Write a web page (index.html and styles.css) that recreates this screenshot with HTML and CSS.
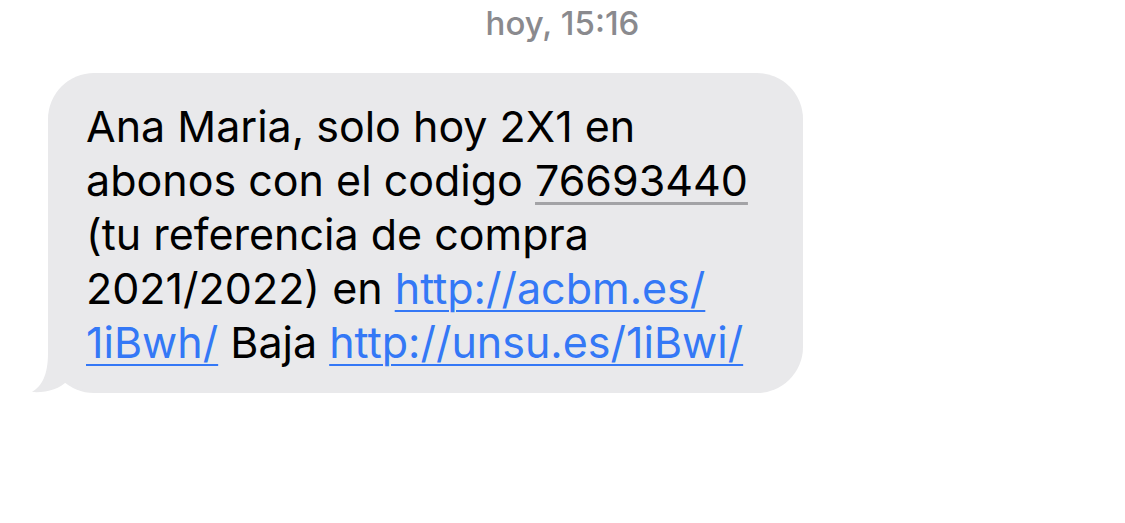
FILE: index.html
```html
<!DOCTYPE html>
<html lang="es">
<head>
    <meta charset="UTF-8">
    <meta name="viewport" content="width=device-width, initial-scale=1.0">
    <title>Mensajes</title>
    <link rel="stylesheet" href="styles.css">
</head>
<body>
    <div class="thread">
        <div class="timestamp">hoy, 15:16</div>
        <div class="bubble">
            <p class="text">Ana Maria, solo hoy 2X1 en<br>abonos con el codigo <span class="code">76693440</span><br>(tu referencia de compra<br>2021/2022) en <a href="#">http://acbm.es/<br>1iBwh/</a> Baja <a href="#">http://unsu.es/1iBwi/</a></p>
            <svg class="tail" width="80" height="70" viewBox="0 0 80 70">
                <path d="M18,6 L18,30 C18,52 12,63 2,69 C16,70 30,66 37,58 C48,66 60,70 75,70 L75,6 Z" fill="#e9e9eb"/>
            </svg>
        </div>
    </div>
</body>
</html>
```

FILE: styles.css
```css
body {
    margin: 0;
    background: #fff;
    font-family: Inter, 'Noto Sans', sans-serif;
}
.thread {
    display: flex;
    flex-direction: column;
}
.timestamp {
    padding-top: 5px;
    height: 39px;
    line-height: 36px;
    font-size: 33px;
    font-weight: 500;
    color: #8a8a8e;
    text-align: center;
}
.bubble {
    position: relative;
    margin: 29px 0 0 48px;
    width: 755px;
    box-sizing: border-box;
    padding: 26px 20px 24px 38px;
    background: #e9e9eb;
    border-radius: 46px;
}
.text {
    position: relative;
    z-index: 1;
    margin: 0;
    font-size: 43px;
    line-height: 54px;
    color: #000;
    white-space: nowrap;
}
.code {
    text-decoration: underline;
    text-decoration-color: #a3a3a6;
    text-decoration-thickness: 3px;
    text-underline-offset: 6px;
}
.text a {
    color: #3478f6;
    text-decoration-thickness: 2px;
    text-underline-offset: 6px;
}
.tail {
    position: absolute;
    left: -18px;
    bottom: 0;
}
```
